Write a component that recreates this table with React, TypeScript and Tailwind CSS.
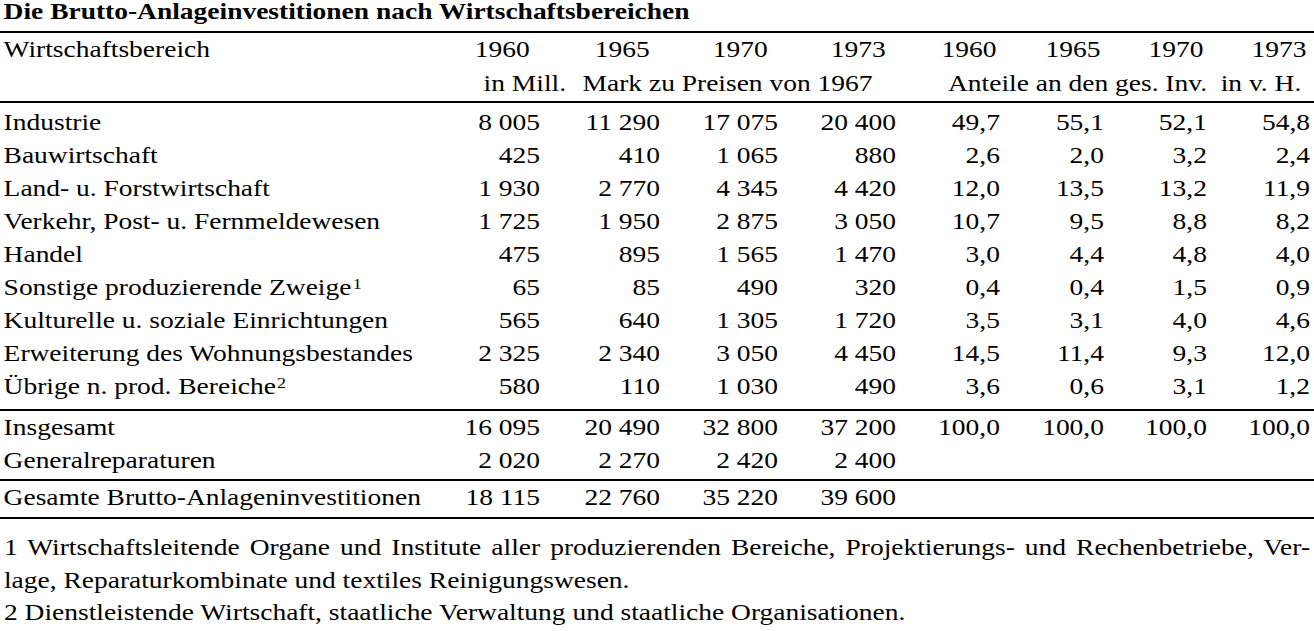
import React from "react";

const GRID =
  "grid grid-cols-[380px_70px_100px_98.3px_98.4px_86.6px_86.7px_85.8px_85.9px]";

const HEAD_PL = [
  "pl-[7px]",
  "pl-[37px]",
  "pl-[35.3px]",
  "pl-[35.4px]",
  "pl-[35.1px]",
  "pl-[35.2px]",
  "pl-[34.3px]",
  "pl-[34.4px]",
];

const years = ["1960", "1965", "1970", "1973", "1960", "1965", "1970", "1973"];

type Row = { label: React.ReactNode; v: string[] };

const Sup = ({ n }: { n: string }) => (
  <span className="text-[15px] leading-[0] align-[6px] ml-[1px]">{n}</span>
);

const main: Row[] = [
  { label: "Industrie", v: ["8 005", "11 290", "17 075", "20 400", "49,7", "55,1", "52,1", "54,8"] },
  { label: "Bauwirtschaft", v: ["425", "410", "1 065", "880", "2,6", "2,0", "3,2", "2,4"] },
  { label: "Land- u. Forstwirtschaft", v: ["1 930", "2 770", "4 345", "4 420", "12,0", "13,5", "13,2", "11,9"] },
  { label: "Verkehr, Post- u. Fernmeldewesen", v: ["1 725", "1 950", "2 875", "3 050", "10,7", "9,5", "8,8", "8,2"] },
  { label: "Handel", v: ["475", "895", "1 565", "1 470", "3,0", "4,4", "4,8", "4,0"] },
  {
    label: (
      <>
        Sonstige produzierende Zweige<Sup n="1" />
      </>
    ),
    v: ["65", "85", "490", "320", "0,4", "0,4", "1,5", "0,9"],
  },
  { label: "Kulturelle u. soziale Einrichtungen", v: ["565", "640", "1 305", "1 720", "3,5", "3,1", "4,0", "4,6"] },
  { label: "Erweiterung des Wohnungsbestandes", v: ["2 325", "2 340", "3 050", "4 450", "14,5", "11,4", "9,3", "12,0"] },
  {
    label: (
      <>
        Übrige n. prod. Bereiche<Sup n="2" />
      </>
    ),
    v: ["580", "110", "1 030", "490", "3,6", "0,6", "3,1", "1,2"],
  },
];

const totals: Row[] = [
  { label: "Insgesamt", v: ["16 095", "20 490", "32 800", "37 200", "100,0", "100,0", "100,0", "100,0"] },
  { label: "Generalreparaturen", v: ["2 020", "2 270", "2 420", "2 400", "", "", "", ""] },
];

const gesamt: Row[] = [
  { label: "Gesamte Brutto-Anlageninvestitionen", v: ["18 115", "22 760", "35 220", "39 600", "", "", "", ""] },
];

function DataRow({ row }: { row: Row }) {
  return (
    <div className={`${GRID} h-[33px]`}>
      <div className="pl-[3px] whitespace-nowrap">{row.label}</div>
      {row.v.map((x, i) => (
        <div key={i} className="text-right whitespace-nowrap">
          {x}
        </div>
      ))}
    </div>
  );
}

export default function App() {
  return (
    <div className="w-[1314px] h-[631px] bg-white overflow-hidden text-black">
      <div className="w-[1095px] origin-left scale-x-[1.2] font-['Liberation_Serif',serif] text-[22.9px] leading-[33px]">
        <div className="h-[31px] leading-[23px] font-bold pl-[3px] whitespace-nowrap">
          Die Brutto-Anlageinvestitionen nach Wirtschaftsbereichen
        </div>

        <div className="border-t-2 border-black">
          <div className={`${GRID} h-[34px]`}>
            <div className="pl-[3px]">Wirtschaftsbereich</div>
            {years.map((y, i) => (
              <div key={i} className={`${HEAD_PL[i]} text-center`}>
                {y}
              </div>
            ))}
          </div>
          <div className={`${GRID} h-[34px]`}>
            <div />
            <div className="col-span-4 flex whitespace-nowrap pl-[23px]">
              <span>in Mill.</span>
              <span className="ml-[13.8px]">Mark zu Preisen von 1967</span>
            </div>
            <div className="col-span-4 flex whitespace-nowrap pl-[43.3px]">
              <span>Anteile an den ges. Inv.</span>
              <span className="ml-[11.3px]">in v. H.</span>
            </div>
          </div>
        </div>

        <div className="border-t-2 border-black pt-[3px] pb-[6px]">
          {main.map((r, i) => (
            <DataRow key={i} row={r} />
          ))}
        </div>

        <div className="border-t-2 border-black pb-[2px]">
          {totals.map((r, i) => (
            <DataRow key={i} row={r} />
          ))}
        </div>

        <div className="border-t-2 border-black pb-[3px]">
          {gesamt.map((r, i) => (
            <DataRow key={i} row={r} />
          ))}
        </div>

        <div className="border-t-2 border-black pt-[13px] px-[3.3px] leading-[32.5px]">
          <div className="whitespace-nowrap [text-align-last:justify] text-justify">
            1 Wirtschaftsleitende Organe und Institute aller produzierenden Bereiche, Projektierungs- und Rechenbetriebe, Ver-
          </div>
          <div className="whitespace-nowrap">lage, Reparaturkombinate und textiles Reinigungswesen.</div>
          <div className="whitespace-nowrap">
            2 Dienstleistende Wirtschaft, staatliche Verwaltung und staatliche Organisationen.
          </div>
        </div>
      </div>
    </div>
  );
}
